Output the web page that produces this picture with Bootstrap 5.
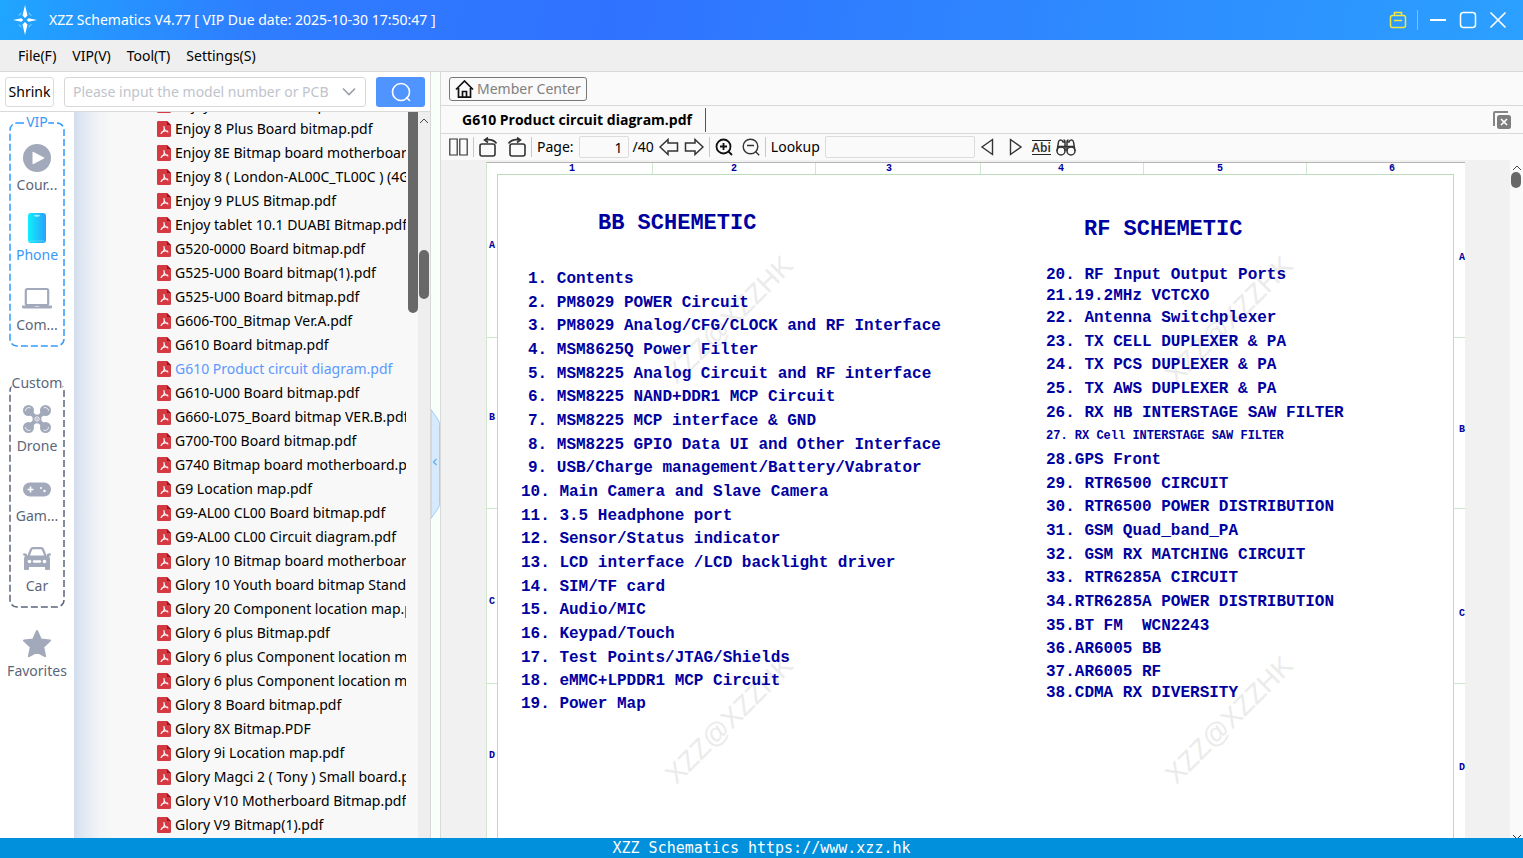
<!DOCTYPE html>
<html lang="en">
<head>
<meta charset="utf-8">
<meta name="viewport" content="width=device-width, initial-scale=1">
<title>XZZ Schematics</title>
<link href="https://cdn.jsdelivr.net/npm/bootstrap@5.3.0/dist/css/bootstrap.min.css" rel="stylesheet">
<style>
body{font-family:"Noto Sans","Open Sans",sans-serif;font-size:14px;line-height:20px;color:#000;background:#fff}
button{font:inherit}
.title-bar{height:40px;background:linear-gradient(100deg,#1fa6ff 0,#2f7dff 17%,#2f72ff 40%,#2e8cff 75%,#2ba0ff 100%);color:#fff}
.ghost{background:none;border:0;padding:0;color:inherit;display:flex;align-items:center;justify-content:center;flex:none}
.menu-bar{height:32px;background:#efefef;border-bottom:1px solid #d9d9d9;padding-left:18px}
.menu-bar a{color:#000;text-decoration:none}
.left-pane{width:431px;border-right:1px solid #d9d9d9}
.search-row{height:40px;border-bottom:1px solid #d9d9d9;padding:5px}
.shrink-btn{width:49px;height:30px;border:1px solid #dcdcdc;border-radius:3px;background:#fff;padding:0}
.model-box{height:30px;border:1px solid #d8d8d8;border-radius:3px;margin-left:10px;margin-right:10px;padding-right:8px}
.model-box input{border:0;outline:0;background:none;padding:0 0 0 8px;min-width:0}
.model-box input::placeholder{color:#c0c4cc;opacity:1}
.search-btn{width:49px;height:30px;border:0;border-radius:3px;background:#4f94ff;color:#fff}
.side-bar{width:74px;padding-top:10px}
.side-group{width:56px;padding:20px 0 11px;margin-bottom:36px;color:#5b6679}
.side-group.last-group{margin-bottom:20px}
.side-group .outline{position:absolute;inset:0;width:100%;height:100%;pointer-events:none}
.side-group .outline rect{width:calc(100% - 2px);height:calc(100% - 2px)}
.side-group .legend-text{position:absolute;top:-10px;left:50%;transform:translateX(-50%);background:#fff;line-height:20px}
.side-item{color:#5b6679;text-decoration:none;height:54px;margin-bottom:16px}
.side-group .side-item:last-child{margin-bottom:0}
.side-item svg{height:32px}
.side-item span{line-height:22px}
.side-item.current{color:#3a98f8}
.tree{background:linear-gradient(90deg,#d3deee 0,#e2e9f2 10px,#f3f4f6 26px,#f8f8f8 40px)}
.tree-list{padding-left:83px;margin-right:12px;padding-bottom:1px}
.tree-list a{height:24px;line-height:24px;color:#000;text-decoration:none;gap:4px;flex:none}
.tree-list a.current{color:#5c98ff}
.bar-dark{position:absolute;right:0;top:0;width:10px;height:201px;background:#686868;border-radius:0 0 5px 5px}
.scroll-track{width:12px;background:#eee}
.scroll-thumb{background:#686868;border-radius:5px;width:10px;position:absolute}
.splitter{width:9px;background:#f9fff9}
.fold{position:absolute;top:44%;left:0;width:9px;height:110px}
.viewer{border-left:1px solid #d9d9d9;background:#fafafa}
.member-row{height:34px;border-bottom:1px solid #d9d9d9;padding-left:8px}
.member-btn{height:24px;border:1px solid #777;border-radius:3px;color:#808080;background:#fafafa;padding:0 5px;gap:3px}
.tab-row{height:28px;border-bottom:1px solid #d9d9d9}
.tab-name{padding:0 13px 0 21px;height:24px;border:0;border-right:1px solid #555;background:none;font-family:"Open Sans","Noto Sans",sans-serif;font-weight:700}
.tool-row{height:26px;padding-left:8px;gap:5px;color:#333}
.tool-row label,.tool-row span{color:#000}
.sep{width:1px;height:20px;background:#c8c8c8}
.tool-row input{height:22px;border:1px solid #dcdcdc;border-radius:2px;background:#fafafa;padding:0 5px;outline:0}
.page-no{width:50px;text-align:right}
.lookup{width:150px}
.stage{background:#f1f1f1}
.sheet{margin:2px 45px 0;background:#fff;border-top:1px solid #b4b4b4;border-left:1px solid #cfe6cf;display:grid;grid-template:11px 1fr / 10px 1fr 11px;font-family:"Liberation Mono",monospace;font-weight:700;color:#0000a0}
.ruler{font-size:10px;line-height:12px}
.top-ticks,.top-marks{grid-row:1;grid-column:1/4;display:grid}
.top-ticks{grid-template-columns:165fr 163fr 166fr 163fr 163fr 159fr}
.top-ticks i+i{border-left:1px solid #cfe6cf}
.top-marks{grid-template-columns:82fr 162fr 155fr 172fr 159fr 172fr 76fr}
.side-ticks,.side-marks{grid-row:2;display:grid}
.side-ticks{grid-template-rows:163px 171px 175px 1fr}
.side-ticks i+i{border-top:1px solid #cfe6cf}
.side-marks{grid-template-rows:172px 184px 154px 1fr;padding-top:66px;overflow:hidden;text-align:center}
.side-marks.right-marks{padding-top:78px;text-align:right}
.frame{grid-row:2;grid-column:2;border:1px solid #bcdcbc;border-bottom:0;display:grid;grid-template-columns:525fr 407fr;padding-left:23px}
.frame h2{font-size:22px;line-height:26px;font-weight:700;margin:0;white-space:pre}
.toc{font-size:16px;white-space:pre;margin:0;padding:0;list-style:none;display:flex;flex-direction:column}
.toc li{flex:1;display:flex;align-items:center}
.toc.tight li{flex:none;height:21px}
.toc .unit{padding-left:7px}
.toc .fine{font-size:12px}
.water{position:absolute;transform:translate(-50%,-50%) rotate(-45deg);font:400 27px/30px "Liberation Sans",sans-serif;color:#ebebeb}
.status{height:20px;background:#0090dc;color:#fff;font:400 15px/20px "DejaVu Sans Mono",monospace}
</style>
</head>
<body>
<svg width="0" height="0" class="position-absolute" aria-hidden="true">
  <symbol id="pdf" viewBox="0 0 14 16"><path d="M1.2 0H10l4 4v10.800a1.200 1.200 0 0 1-1.200 1.200H1.200A1.200 1.200 0 0 1 0 14.800V1.200A1.200 1.200 0 0 1 1.200 0z" fill="#d53a43"/><path d="M10 0l4 4h-4z" fill="#9c1420"/><path d="M7 5.500c.9 2.700.2 4.600-3 7M7 6c.2 2.600 1.600 4.300 4 5M4.800 10.900c1.800-.9 3.700-1.200 5.700-.8" fill="none" stroke="#fff" stroke-width="1.100" stroke-linecap="round"/></symbol>
</svg>
<div class="d-flex flex-column vh-100 overflow-hidden">
  <header class="title-bar d-flex align-items-center flex-shrink-0 pe-3">
    <svg width="24" height="30" viewBox="0 0 24 30" style="margin-left:13px"><g fill="#fff"><path d="M12 0l2.500 10.500L12 13l-2.500-2.500zM12 30l2.500-10.500L12 17l-2.500 2.500z"/><path d="M0 15l8.500-1.700L10.200 15l-1.700 1.700zM24 15l-8.500-1.700L13.800 15l1.700 1.700z"/></g><path d="M6 10.500A7.500 7.500 0 0 1 8.500 8M15.500 8a7.500 7.500 0 0 1 2.700 2.700M6 19.500A7.500 7.500 0 0 0 8.500 22M15.500 22a7.500 7.500 0 0 0 2.700-2.700" stroke="#a9dcff" fill="none"/></svg>
    <div class="ms-2 ps-1 flex-grow-1 text-nowrap">XZZ Schematics V4.77 [ VIP Due date: 2025-10-30 17:50:47 ]</div>
    <div class="d-flex align-items-center">
      <button class="ghost" aria-label="Toolbox"><svg width="18" height="18" viewBox="0 0 18 18" fill="none" stroke="#f2e83c" stroke-width="1.500"><rect x="1.500" y="4.500" width="15" height="12" rx="2"/><path d="M5.500 4V1.500h7V4M5 9.500h8"/></svg></button>
      <span class="border-start opacity-50" style="height:20px;margin:0 11px 0 10px"></span>
      <button class="ghost" aria-label="Minimize"><svg width="18" height="18" viewBox="0 0 18 18" stroke="#fff" stroke-width="2"><path d="M1 9h16"/></svg></button>
      <button class="ghost ms-2 ps-1" aria-label="Maximize"><svg width="18" height="18" viewBox="0 0 18 18" fill="none" stroke="#fff" stroke-width="1.500"><rect x="1.500" y="1.500" width="15" height="15" rx="3"/></svg></button>
      <button class="ghost ms-2 ps-1" aria-label="Close"><svg width="18" height="18" viewBox="0 0 18 18" stroke="#fff" stroke-width="1.700"><path d="M1.500 1.500l15 15M16.500 1.500l-15 15"/></svg></button>
    </div>
  </header>
  <nav class="menu-bar d-flex align-items-center gap-3 flex-shrink-0">
    <a href="#">File(F)</a><a href="#">VIP(V)</a><a href="#">Tool(T)</a><a href="#">Settings(S)</a>
  </nav>

  <main class="d-flex flex-grow-1 overflow-hidden">
    <section class="left-pane d-flex flex-column flex-shrink-0">
      <div class="search-row d-flex flex-shrink-0">
        <button class="shrink-btn">Shrink</button>
        <div class="model-box d-flex align-items-center flex-grow-1">
          <input class="flex-grow-1" type="text" aria-label="Model number" placeholder="Please input the model number or PCB">
          <button class="ghost ms-1" aria-label="Show models"><svg width="16" height="10" viewBox="0 0 16 10" fill="none" stroke="#9a9fa8" stroke-width="1.600"><path d="M2 1.500l6 6 6-6"/></svg></button>
        </div>
        <button class="search-btn d-flex align-items-center justify-content-center" aria-label="Search"><svg width="20" height="20" viewBox="0 0 20 20" fill="none" stroke="#fff" stroke-width="1.600"><circle cx="10" cy="10" r="8.500"/><path d="M15.500 15.500l3 3" stroke-linecap="round"/></svg></button>
      </div>
      <div class="d-flex flex-grow-1 overflow-hidden">
        <nav class="side-bar d-flex flex-column align-items-center flex-shrink-0 bg-white">
          <div class="side-group position-relative">
            <svg class="outline" fill="none" stroke="#3399ff" stroke-width="1.500" stroke-dasharray="7 3"><rect x="1" y="1" rx="7"/></svg>
            <span class="legend-text" style="color:#3a98f8">VIP</span>
            <a href="#" class="side-item d-flex flex-column align-items-center"><svg width="28" viewBox="0 0 28 32"><circle cx="14" cy="16" r="14" fill="#a2a9ba"/><path d="M9.500 10.500v11q0 1 1 .5l10.500-5.500q.8-.5 0-1L10.500 10q-1-.5-1 .5z" fill="#fff"/></svg><span>Cour...</span></a>
            <a href="#" class="side-item current d-flex flex-column align-items-center"><svg width="20" viewBox="0 0 20 32"><defs><linearGradient id="pg"><stop offset="0" stop-color="#0ff0fb"/><stop offset="1" stop-color="#2aa0fa"/></linearGradient></defs><rect x="1" y="1" width="18" height="30" rx="3" fill="url(#pg)"/><path d="M7.500 3.200h5v.8q-2.500 1.200-5 0zM3 29h14" fill="#fff" stroke="#7fe0ff" stroke-width=".6"/></svg><span>Phone</span></a>
            <a href="#" class="side-item d-flex flex-column align-items-center"><svg width="30" viewBox="0 0 30 32"><rect x="3.800" y="7" width="22.400" height="16" rx="1.500" fill="none" stroke="#a2a9ba" stroke-width="2.200"/><path d="M0 23.500h12l1 1h4l1-1h12v1.500q0 1.500-1.500 1.500h-27Q0 26.500 0 25z" fill="#a2a9ba"/></svg><span>Com...</span></a>
          </div>
          <div class="side-group last-group position-relative">
            <svg class="outline" fill="none" stroke="#5b6679" stroke-width="1.500" stroke-dasharray="7 3"><rect x="1" y="1" rx="7"/></svg>
            <span class="legend-text">Custom</span>
            <a href="#" class="side-item d-flex flex-column align-items-center"><svg width="28" viewBox="0 0 28 32"><g fill="#a2a9ba"><circle cx="5.500" cy="7.500" r="5.500"/><circle cx="22.500" cy="7.500" r="5.500"/><circle cx="5.500" cy="24.500" r="5.500"/><circle cx="22.500" cy="24.500" r="5.500"/><circle cx="14" cy="16" r="4.500"/></g><path d="M6 8l16 16M22 8L6 24" stroke="#a2a9ba" stroke-width="4"/><g fill="none" stroke="#fff" stroke-width=".8"><path d="M2.500 8a3.300 3.300 0 0 1 5-3M20.500 5a3.300 3.300 0 0 1 5 3M2.500 24a3.300 3.300 0 0 0 5 3M20.500 27a3.300 3.300 0 0 0 5-3"/><circle cx="14" cy="16" r="2.200"/></g><circle cx="14" cy="16" r=".8" fill="#fff"/></svg><span>Drone</span></a>
            <a href="#" class="side-item d-flex flex-column align-items-center"><svg width="28" viewBox="0 0 28 32"><rect y="9.500" width="28" height="14" rx="7" fill="#a2a9ba"/><path d="M4.500 16.500h6M7.500 13.500v6" stroke="#fff" stroke-width="1.600"/><circle cx="18" cy="15" r="1" fill="#fff"/><circle cx="21.500" cy="18" r="1.200" fill="#fff"/></svg><span>Gam...</span></a>
            <a href="#" class="side-item d-flex flex-column align-items-center"><svg width="28" viewBox="0 0 28 32"><path d="M5.500 13L8 6.500Q8.500 5.200 10 5.200h8q1.500 0 2 1.300l2.500 6.500" fill="none" stroke="#a2a9ba" stroke-width="2.200"/><path d="M0 11.500q0-1.300 1.500-1.300L4 11v1.500h20V11l2.500-.8q1.500 0 1.500 1.300 0 1-2 1.500 1 1 1 3V26q0 1-1 1h-3q-1 0-1-1v-2H6v2q0 1-1 1H2q-1 0-1-1V16q0-2 1-3-2-.5-2-1.500z" fill="#a2a9ba"/><circle cx="6.500" cy="18.500" r="1.800" fill="#fff"/><circle cx="21.500" cy="18.500" r="1.800" fill="#fff"/><path d="M11 18.500h6" stroke="#fff" stroke-width="2.400" stroke-linecap="round"/></svg><span>Car</span></a>
          </div>
          <a href="#" class="side-item d-flex flex-column align-items-center"><svg width="28" viewBox="0 0 28 32"><path d="M14 3l3.800 8.400 9.200 1.200-6.800 6.400 1.900 9.200L14 23.800l-8.100 4.400 1.900-9.200L1 12.600l9.200-1.200z" fill="#a2a9ba" stroke="#a2a9ba" stroke-width="2" stroke-linejoin="round"/></svg><span>Favorites</span></a>
        </nav>
        <div class="tree position-relative flex-grow-1 overflow-hidden d-flex">
          <div id="files" class="tree-list flex-grow-1 overflow-hidden d-flex flex-column justify-content-end"></div>
          <div class="bar-dark"></div>
        </div>
        <div class="scroll-track position-relative flex-shrink-0 ms-auto">
          <svg class="d-block mx-auto mt-1" width="10" height="10" viewBox="0 0 10 10" fill="none" stroke="#444"><path d="M1 7l4-4 4 4"/></svg>
          <div class="scroll-thumb" style="top:19%;height:49px;left:1px"></div>
        </div>
      </div>
    </section>

    <div class="splitter position-relative flex-shrink-0">
      <button class="ghost fold" aria-label="Collapse panel"><svg width="9" height="110" viewBox="0 0 9 110"><path d="M0 .5l7 10q1.500 2 1.500 5v79q0 3-1.500 5l-7 10z" fill="#d6e9fd" stroke="#9fd0f8"/><path d="M5.500 50l-3 3 3 3" fill="none" stroke="#5ab0f5" stroke-width="1.200"/></svg></button>
    </div>

    <section class="viewer d-flex flex-column flex-grow-1 overflow-hidden">
      <div class="member-row d-flex align-items-center flex-shrink-0">
        <button class="member-btn d-flex align-items-center"><svg width="19" height="18" viewBox="0 0 19 18" fill="none" stroke="#111" stroke-width="1.700"><path d="M1 9.500L9.500 1 18 9.500M3.500 8v9.200h12V8M7.500 17v-5.500h4V17"/></svg>Member Center</button>
      </div>
      <div class="tab-row d-flex align-items-center justify-content-between flex-shrink-0 pe-2">
        <button class="tab-name">G610 Product circuit diagram.pdf</button>
        <button class="ghost me-1" aria-label="Close all tabs"><svg width="18" height="18" viewBox="0 0 18 18"><path d="M1 15V2q0-1 1-1h13" fill="none" stroke="#858585" stroke-width="2"/><rect x="4" y="4" width="14" height="14" rx="2.500" fill="#7d7d7d"/><path d="M8 8l6 6M14 8l-6 6" stroke="#fff" stroke-width="1.700"/></svg></button>
      </div>
      <div class="tool-row d-flex align-items-center flex-shrink-0">
        <button class="ghost" aria-label="Two pages"><svg width="19" height="18" viewBox="0 0 19 18" fill="none" stroke="#333" stroke-width="1.200"><path d="M.8 1h7.400v16H.8zM10.800 1h7.400v16h-7.400z"/></svg></button>
        <i class="sep"></i>
        <button class="ghost" aria-label="Rotate left"><svg width="19" height="20" viewBox="0 0 19 20" fill="none" stroke="#333" stroke-width="1.600"><rect x="1" y="7" width="15" height="12" rx="2"/><path d="M6 3q8-1.500 11.500 3.500M9 .5L5.500 3 9 5.500"/></svg></button>
        <button class="ghost ms-1" aria-label="Rotate right"><svg width="19" height="20" viewBox="0 0 19 20" fill="none" stroke="#333" stroke-width="1.600"><rect x="3" y="7" width="15" height="12" rx="2"/><path d="M13 3Q5 1.500 1.500 6.500M10 .5L13.500 3 10 5.500"/></svg></button>
        <i class="sep"></i>
        <label for="pageNo">Page:</label>
        <div class="d-flex align-items-center gap-1">
          <input id="pageNo" class="page-no" type="text" value="1">
          <span>/40</span>
        </div>
        <button class="ghost" aria-label="Previous page"><svg width="20" height="18" viewBox="0 0 20 18" fill="none" stroke="#333" stroke-width="1.500"><path d="M1 9l8-7.500V5h9.500v8H9v3.500z"/></svg></button>
        <button class="ghost" aria-label="Next page"><svg width="20" height="18" viewBox="0 0 20 18" fill="none" stroke="#333" stroke-width="1.500"><path d="M19 9l-8-7.500V5H1.500v8H11v3.500z"/></svg></button>
        <i class="sep"></i>
        <button class="ghost" aria-label="Zoom in"><svg width="18" height="18" viewBox="0 0 18 18" fill="none" stroke="#111" stroke-width="1.800"><circle cx="8.500" cy="8.500" r="7"/><path d="M13.500 13.500l3.500 3.500M5 8.500h7M8.500 5v7"/></svg></button>
        <button class="ghost ms-1" aria-label="Zoom out"><svg width="18" height="18" viewBox="0 0 18 18" fill="none" stroke="#333" stroke-width="1.400"><circle cx="8.500" cy="8.500" r="7.300"/><path d="M13.500 13.500l3.700 3.700M5 7.500h7"/></svg></button>
        <i class="sep"></i>
        <label for="find">Lookup</label>
        <input id="find" class="lookup" type="text">
        <button class="ghost" aria-label="Find previous"><svg width="15" height="18" viewBox="0 0 15 18" fill="none" stroke="#333" stroke-width="1.400"><path d="M12.500 1.500v15L2 9z"/></svg></button>
        <button class="ghost ms-2" aria-label="Find next"><svg width="15" height="18" viewBox="0 0 15 18" fill="none" stroke="#333" stroke-width="1.400"><path d="M2.500 1.500v15L13 9z"/></svg></button>
        <button class="ghost border-top border-bottom border-dark ms-1" style="font-size:12px;line-height:13px;font-weight:600">Abi</button>
        <button class="ghost" aria-label="Find in files"><svg width="20" height="17" viewBox="0 0 20 17" fill="none" stroke="#333" stroke-width="1.500"><circle cx="5" cy="12" r="4"/><circle cx="15" cy="12" r="4"/><path d="M1 12L2.500 3q.3-2 2-2Q6.500 1 7 3l2 0M19 12L17.500 3q-.3-2-2-2-2 0-2.500 2h-2M9 12V3q0-2-1.500-2M11 12V3q0-2 1.500-2M9 7.500h2M2 7.500h7M11 7.500h7"/></svg></button>
      </div>
      <div class="d-flex flex-grow-1 overflow-hidden">
        <div class="stage flex-grow-1 overflow-hidden d-flex">
          <div class="sheet flex-grow-1">
            <div class="top-ticks"><i></i><i></i><i></i><i></i><i></i><i></i></div>
            <div class="top-marks ruler"><b></b><b>1</b><b>2</b><b>3</b><b>4</b><b>5</b><b>6</b></div>
            <div class="side-ticks" style="grid-column:1"><i></i><i></i><i></i><i></i></div>
            <div class="side-marks ruler" style="grid-column:1"><b>A</b><b>B</b><b>C</b><b>D</b></div>
            <div class="frame position-relative">
              <span class="water" style="left:24.200%;top:145px">XZZ@XZZHK</span>
              <span class="water" style="left:76.500%;top:145px">XZZ@XZZHK</span>
              <span class="water" style="left:24.200%;top:545px">XZZ@XZZHK</span>
              <span class="water" style="left:76.500%;top:545px">XZZ@XZZHK</span>
              <div class="position-relative" style="padding-top:36px">
                <h2 style="padding-left:77px;margin-bottom:30px">BB SCHEMETIC</h2>
                <ul class="toc" style="height:426px"><li class="unit">1. Contents</li><li class="unit">2. PM8029 POWER Circuit</li><li class="unit">3. PM8029 Analog/CFG/CLOCK and RF Interface</li><li class="unit">4. MSM8625Q Power Filter</li><li class="unit">5. MSM8225 Analog Circuit and RF interface</li><li class="unit">6. MSM8225 NAND+DDR1 MCP Circuit</li><li class="unit">7. MSM8225 MCP interface &amp; GND</li><li class="unit">8. MSM8225 GPIO Data UI and Other Interface</li><li class="unit">9. USB/Charge management/Battery/Vabrator</li><li>10. Main Camera and Slave Camera</li><li>11. 3.5 Headphone port</li><li>12. Sensor/Status indicator</li><li>13. LCD interface /LCD backlight driver</li><li>14. SIM/TF card</li><li>15. Audio/MIC</li><li>16. Keypad/Touch</li><li>17. Test Points/JTAG/Shields</li><li>18. eMMC+LPDDR1 MCP Circuit</li></ul>
                <ul class="toc tight"><li>19. Power Map</li></ul>
              </div>
              <div class="position-relative" style="padding-top:42px">
                <h2 style="padding-left:38px;margin-bottom:21px">RF SCHEMETIC</h2>
                <ul class="toc tight"><li>20. RF Input Output Ports</li><li>21.19.2MHz VCTCXO</li></ul>
                <ul class="toc" style="height:355px"><li>22. Antenna Switchplexer</li><li>23. TX CELL DUPLEXER &amp; PA</li><li>24. TX PCS DUPLEXER &amp; PA</li><li>25. TX AWS DUPLEXER &amp; PA</li><li>26. RX HB INTERSTAGE SAW FILTER</li><li class="fine">27. RX Cell INTERSTAGE SAW FILTER</li><li>28.GPS Front</li><li>29. RTR6500 CIRCUIT</li><li>30. RTR6500 POWER DISTRIBUTION</li><li>31. GSM Quad_band_PA</li><li>32. GSM RX MATCHING CIRCUIT</li><li>33. RTR6285A CIRCUIT</li><li>34.RTR6285A POWER DISTRIBUTION</li><li>35.BT FM  WCN2243</li><li>36.AR6005 BB</li></ul>
                <ul class="toc tight"><li>37.AR6005 RF</li><li>38.CDMA RX DIVERSITY</li></ul>
              </div>
            </div>
            <div class="side-ticks" style="grid-column:3"><i></i><i></i><i></i><i></i></div>
            <div class="side-marks right-marks ruler" style="grid-column:3"><b>A</b><b>B</b><b>C</b><b>D</b></div>
          </div>
        </div>
        <div class="position-relative flex-shrink-0 d-flex flex-column justify-content-between overflow-hidden" style="width:13px">
          <svg class="d-block ms-auto me-auto mt-1" width="10" height="8" viewBox="0 0 10 8" fill="none" stroke="#444"><path d="M1 6l4-4 4 4"/></svg>
          <div class="scroll-thumb" style="top:12px;height:16px;left:1px"></div>
          <svg class="d-block mx-auto" width="10" height="4" viewBox="0 0 10 4" fill="none" stroke="#333"><path d="M1 1l4 4 4-4"/></svg>
        </div>
      </div>
    </section>
  </main>
  <footer class="status text-center flex-shrink-0">XZZ Schematics https://www.xzz.hk</footer>
</div>
<script>
const files = ["Enjoy 7 motherboard.pdf","Enjoy 8 Plus Board bitmap.pdf","Enjoy 8E Bitmap board motherboard.pdf","Enjoy 8 ( London-AL00C_TL00C ) (4G).pdf","Enjoy 9 PLUS Bitmap.pdf","Enjoy tablet 10.1 DUABI Bitmap.pdf","G520-0000 Board bitmap.pdf","G525-U00 Board bitmap(1).pdf","G525-U00 Board bitmap.pdf","G606-T00_Bitmap Ver.A.pdf","G610 Board bitmap.pdf","G610 Product circuit diagram.pdf","G610-U00 Board bitmap.pdf","G660-L075_Board bitmap VER.B.pdf","G700-T00 Board bitmap.pdf","G740 Bitmap board motherboard.pdf","G9 Location map.pdf","G9-AL00 CL00 Board bitmap.pdf","G9-AL00 CL00 Circuit diagram.pdf","Glory 10 Bitmap board motherboard.pdf","Glory 10 Youth board bitmap Standard.pdf","Glory 20 Component location map.pdf","Glory 6 plus Bitmap.pdf","Glory 6 plus Component location map.pdf","Glory 6 plus Component location map(1).pdf","Glory 8 Board bitmap.pdf","Glory 8X Bitmap.PDF","Glory 9i Location map.pdf","Glory Magci 2 ( Tony ) Small board.pdf","Glory V10 Motherboard Bitmap.pdf","Glory V9 Bitmap(1).pdf"];
document.getElementById("files").innerHTML = files.map(f =>
  `<a href="#" class="d-flex align-items-center text-nowrap${f === "G610 Product circuit diagram.pdf" ? " current" : ""}"><svg class="flex-shrink-0" width="14" height="16"><use href="#pdf"/></svg><span>${f}</span></a>`).join("");
</script>
<script src="https://cdn.jsdelivr.net/npm/bootstrap@5.3.0/dist/js/bootstrap.bundle.min.js"></script>
</body>
</html>
